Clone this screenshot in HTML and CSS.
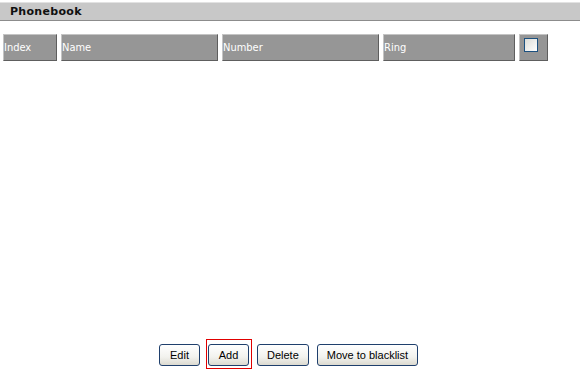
FILE: index.html
```html
<!DOCTYPE html>
<html lang="en">
<head>
    <meta charset="UTF-8">
    <title>Phonebook</title>
    <link rel="stylesheet" href="styles.css">
</head>
<body>
    <div class="title_bar">Phonebook</div>

    <div class="list_head">
        <div class="head_cell col_index">Index</div>
        <div class="head_cell col_name">Name</div>
        <div class="head_cell col_number">Number</div>
        <div class="head_cell col_ring">Ring</div>
        <div class="head_cell col_check"><span class="check_box"></span></div>
    </div>

    <div class="button_row">
        <button class="btn">Edit</button>
        <span class="focus_box"><button class="btn">Add</button></span>
        <button class="btn">Delete</button>
        <button class="btn">Move to blacklist</button>
    </div>
</body>
</html>
```

FILE: styles.css
```css
body {
    font-family: "DejaVu Sans", Verdana, sans-serif;
    font-size: 11px;
    margin: 0;
    padding: 0;
    background-color: #ffffff;
}

.title_bar {
    margin-top: 2px;
    width: 578px;
    height: 17px;
    line-height: 17px;
    padding-left: 10px;
    box-sizing: content-box;
    background-color: #c8c8c8;
    border-top: 1px solid #e2e2e2;
    border-bottom: 1px solid #8c8c8c;
    border-right: 1px solid #a0a0a0;
    color: #101010;
    font-weight: bold;
    letter-spacing: 0.3px;
}

.list_head {
    display: flex;
    gap: 4px;
    margin-top: 13px;
    padding-left: 3px;
}

.head_cell {
    box-sizing: border-box;
    height: 27px;
    line-height: 25px;
    background-color: #969696;
    border: 1px solid;
    border-color: #c4c4c4 #5e5e5e #5e5e5e #c4c4c4;
    color: #ffffff;
    font-stretch: condensed;
}

.col_index { width: 54px; }
.col_name { width: 157px; }
.col_number { width: 157px; }
.col_ring { width: 132px; }

.col_check {
    width: 29px;
    padding: 3px 0 0 4px;
    line-height: 0;
}

.check_box {
    display: inline-block;
    box-sizing: border-box;
    width: 14px;
    height: 14px;
    border: 1px solid #1c5180;
    background: linear-gradient(135deg, #dcdcd7, #ffffff);
}

.button_row {
    display: flex;
    align-items: flex-start;
    gap: 8px;
    margin-top: 278px;
    padding-top: 5px;
    padding-left: 159px;
}

.focus_box {
    display: inline-block;
    margin: -5px -3px 0 -2px;
    padding: 4px 2px 2px 1px;
    border: 1px solid #e00000;
}

.btn {
    display: block;
    height: 22px;
    min-width: 41px;
    padding: 0 9px;
    font-family: "Liberation Sans", Arial, sans-serif;
    font-size: 11px;
    color: #000000;
    background: linear-gradient(#ffffff, #f2f2ee 60%, #dcdad0);
    border: 1px solid #1f3f6c;
    border-radius: 3px;
}
```
